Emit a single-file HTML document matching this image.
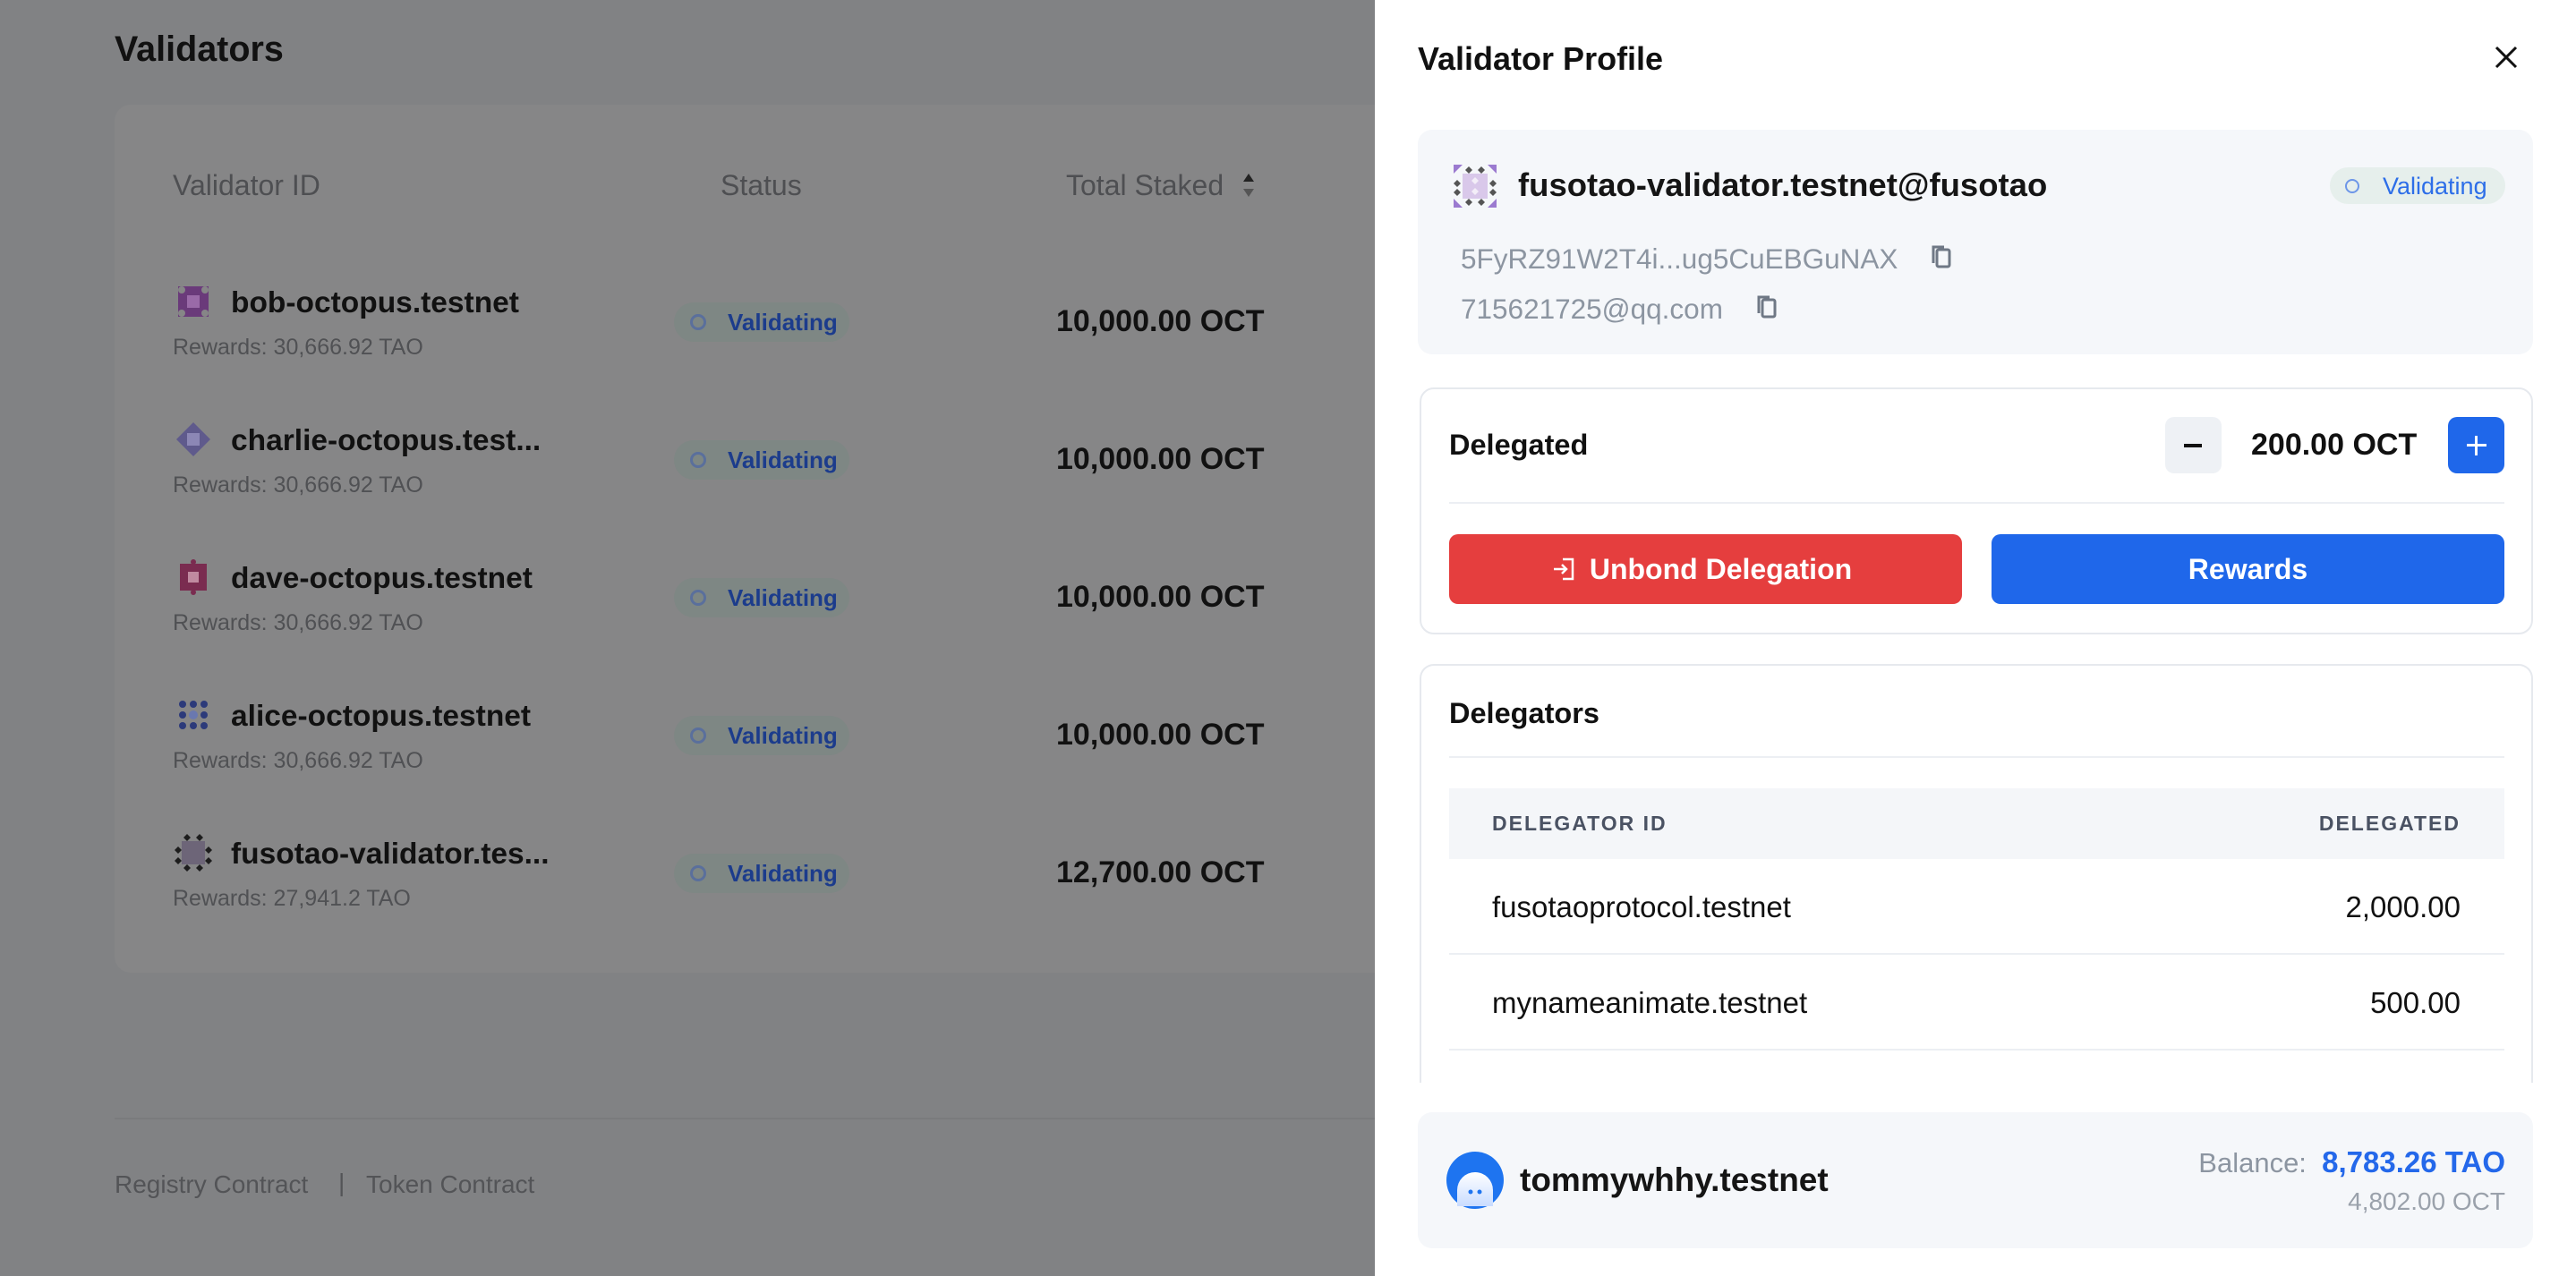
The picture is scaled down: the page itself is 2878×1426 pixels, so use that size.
<!DOCTYPE html>
<html><head><meta charset="utf-8"><style>
*{margin:0;padding:0;box-sizing:border-box}
body{width:2878px;height:1426px;overflow:hidden;background:#818284;font-family:"Liberation Sans",sans-serif;position:relative}
.a{position:absolute;white-space:nowrap}
.card{position:absolute;left:128px;top:117px;width:1500px;height:970px;background:#868687;border-radius:18px}
.hd{color:#4e4f52;font-size:32px;top:189px}
.nm{font-size:33.5px;font-weight:bold;color:#111}
.rw{font-size:25px;color:#505154}
.bd{position:absolute;left:753px;width:196px;height:44px;border-radius:22px;background:#7e8784;color:#1c3c8c;font-size:26px;font-weight:bold;line-height:44px;padding-left:60px}
.bd:before{content:"";position:absolute;left:18px;top:13px;width:12px;height:12px;border:3px solid #5a6f9c;border-radius:50%}
.amt{font-size:34px;font-weight:bold;color:#111;left:1180px}
.panel{position:absolute;left:1536px;top:0;width:1342px;height:1426px;background:#fff}
.p{position:absolute;white-space:nowrap}
.b{font-weight:bold;color:#111}
</style></head><body>
<div class="a" style="left:128px;top:33px;font-size:39.5px;font-weight:bold;color:#111">Validators</div>
<div class="card"></div>
<div class="a hd" style="left:193px">Validator ID</div>
<div class="a hd" style="left:805px">Status</div>
<div class="a hd" style="left:1191px">Total Staked</div>
<svg class="a" style="left:1387px;top:192px" width="16" height="30"><path d="M8 2 L14 11 H2Z" fill="#222"/><path d="M8 28 L14 19 H2Z" fill="#555"/></svg>

<svg class="a" style="left:195px;top:316px" width="42" height="42"><rect x="4" y="4" width="34" height="34" fill="#6a3a7a"/><rect x="14" y="14" width="14" height="14" fill="#9a6aa8"/><circle cx="8" cy="8" r="4" fill="#868687"/><circle cx="34" cy="34" r="4" fill="#868687"/><circle cx="34" cy="8" r="4" fill="#868687"/><circle cx="8" cy="34" r="4" fill="#868687"/></svg>
<div class="a nm" style="left:258px;top:320px">bob-octopus.testnet</div>
<div class="a rw" style="left:193px;top:374px">Rewards: 30,666.92 TAO</div>
<div class="bd" style="top:338px">Validating</div>
<div class="a amt" style="top:340px">10,000.00 OCT</div>

<svg class="a" style="left:195px;top:470px" width="42" height="42"><path d="M21 2 L40 21 L21 40 L2 21Z" fill="#5f5a8c"/><rect x="14" y="14" width="14" height="14" fill="#8c87b5"/></svg>
<div class="a nm" style="left:258px;top:474px">charlie-octopus.test...</div>
<div class="a rw" style="left:193px;top:528px">Rewards: 30,666.92 TAO</div>
<div class="bd" style="top:492px">Validating</div>
<div class="a amt" style="top:494px">10,000.00 OCT</div>

<svg class="a" style="left:195px;top:624px" width="42" height="42"><rect x="6" y="6" width="30" height="30" fill="#7a2c50"/><rect x="15" y="15" width="12" height="12" fill="#c08aa0"/><circle cx="21" cy="4" r="3" fill="#7a2c50"/><circle cx="21" cy="38" r="3" fill="#7a2c50"/></svg>
<div class="a nm" style="left:258px;top:628px">dave-octopus.testnet</div>
<div class="a rw" style="left:193px;top:682px">Rewards: 30,666.92 TAO</div>
<div class="bd" style="top:646px">Validating</div>
<div class="a amt" style="top:648px">10,000.00 OCT</div>

<svg class="a" style="left:195px;top:778px" width="42" height="42"><g fill="#2c3a7a"><circle cx="9" cy="9" r="4"/><circle cx="21" cy="9" r="4"/><circle cx="33" cy="9" r="4"/><circle cx="9" cy="21" r="4"/><circle cx="33" cy="21" r="4"/><circle cx="9" cy="33" r="4"/><circle cx="21" cy="33" r="4"/><circle cx="33" cy="33" r="4"/></g><circle cx="21" cy="21" r="5" fill="#6a78b0"/></svg>
<div class="a nm" style="left:258px;top:782px">alice-octopus.testnet</div>
<div class="a rw" style="left:193px;top:836px">Rewards: 30,666.92 TAO</div>
<div class="bd" style="top:800px">Validating</div>
<div class="a amt" style="top:802px">10,000.00 OCT</div>

<svg class="a" style="left:195px;top:932px" width="42" height="42"><rect x="8" y="8" width="26" height="26" fill="#6d6578"/><g fill="#1d1d1d"><path d="M14 0l4 4-4 4-4-4z"/><path d="M28 0l4 4-4 4-4-4z"/><path d="M4 14l4 4-4 4-4-4z"/><path d="M38 14l4 4-4 4-4-4z"/><path d="M4 26l4 4-4 4-4-4z"/><path d="M38 26l4 4-4 4-4-4z"/><path d="M14 34l4 4-4 4-4-4z"/><path d="M28 34l4 4-4 4-4-4z"/></g></svg>
<div class="a nm" style="left:258px;top:936px">fusotao-validator.tes...</div>
<div class="a rw" style="left:193px;top:990px">Rewards: 27,941.2 TAO</div>
<div class="bd" style="top:954px">Validating</div>
<div class="a amt" style="top:956px">12,700.00 OCT</div>

<div class="a" style="left:128px;top:1249px;width:1410px;height:2px;background:#7a7b7d"></div>
<div class="a" style="left:128px;top:1308px;font-size:28px;color:#535457">Registry Contract</div>
<div class="a" style="left:378px;top:1306px;font-size:28px;color:#535457">|</div>
<div class="a" style="left:409px;top:1308px;font-size:28px;color:#535457">Token Contract</div>

<div class="panel">
 <div class="p b" style="left:48px;top:45px;font-size:36px">Validator Profile</div>
 <svg class="p" style="left:1250px;top:50px" width="28" height="28"><path d="M3 3L25 25M25 3L3 25" stroke="#111" stroke-width="3"/></svg>

 <div class="p" style="left:48px;top:145px;width:1246px;height:251px;background:#f5f7fa;border-radius:16px"></div>
 <svg class="p" style="left:88px;top:184px" width="48" height="48"><rect x="10" y="10" width="28" height="28" fill="#d9c8ea"/><path d="M0 0h10L0 10z M48 0v10L38 0z M0 48v-10l10 10z M48 48h-10l10-10z" fill="#9b7ad0"/><g fill="#555"><path d="M17 2l4 4-4 4-4-4z"/><path d="M31 2l4 4-4 4-4-4z"/><path d="M4 17l4 4-4 4-4-4z"/><path d="M44 17l4 4-4 4-4-4z"/><path d="M4 27l4 4-4 4-4-4z"/><path d="M44 27l4 4-4 4-4-4z"/><path d="M17 38l4 4-4 4-4-4z"/><path d="M31 38l4 4-4 4-4-4z"/></g><g fill="#fff" opacity=".7"><path d="M24 14l4 4-4 4-4-4z"/><path d="M24 26l4 4-4 4-4-4z"/></g></svg>
 <div class="p b" style="left:160px;top:186px;font-size:36.5px;color:#151515">fusotao-validator.testnet@fusotao</div>
 <div class="p" style="left:1067px;top:187px;width:196px;height:41px;border-radius:21px;background:#e6efec"></div>
 <div class="p" style="left:1084px;top:200px;width:16px;height:16px;border:2px solid #6d96e8;border-radius:50%"></div>
 <div class="p" style="left:1126px;top:193px;font-size:27px;color:#2d6ee8">Validating</div>
 <div class="p" style="left:96px;top:271px;font-size:31.5px;color:#8c95a1">5FyRZ91W2T4i...ug5CuEBGuNAX</div>
 <svg class="p" style="left:620px;top:272px" width="26" height="30"><rect x="8" y="7" width="14" height="19" rx="2" fill="none" stroke="#6f7885" stroke-width="3"/><path d="M4 22V4h12" fill="none" stroke="#6f7885" stroke-width="3"/></svg>
 <div class="p" style="left:96px;top:327px;font-size:31.5px;color:#8c95a1">715621725@qq.com</div>
 <svg class="p" style="left:425px;top:328px" width="26" height="30"><rect x="8" y="7" width="14" height="19" rx="2" fill="none" stroke="#6f7885" stroke-width="3"/><path d="M4 22V4h12" fill="none" stroke="#6f7885" stroke-width="3"/></svg>

 <div class="p" style="left:50px;top:433px;width:1244px;height:276px;border:2px solid #e6e9ee;border-radius:16px"></div>
 <div class="p b" style="left:83px;top:479px;font-size:32.5px">Delegated</div>
 <div class="p" style="left:883px;top:466px;width:63px;height:63px;border-radius:10px;background:#eef1f5"></div>
 <div class="p" style="left:904px;top:496px;width:20px;height:4px;background:#111"></div>
 <div class="p b" style="left:979px;top:478px;font-size:34px">200.00 OCT</div>
 <div class="p" style="left:1199px;top:466px;width:63px;height:63px;border-radius:10px;background:#1f67ea"></div>
 <div class="p" style="left:1220px;top:496px;width:22px;height:3px;background:#fff"></div>
 <div class="p" style="left:1229px;top:487px;width:3px;height:22px;background:#fff"></div>
 <div class="p" style="left:83px;top:561px;width:1179px;height:2px;background:#eceff3"></div>
 <div class="p" style="left:83px;top:597px;width:573px;height:78px;border-radius:10px;background:#e53e3e;color:#fff;font-size:32px;font-weight:bold;text-align:center;line-height:78px;padding-left:34px">Unbond Delegation</div>
 <svg class="p" style="left:198px;top:622px" width="28" height="28"><path d="M12 3h11v22H12" fill="none" stroke="#fff" stroke-width="2.5"/><path d="M2 14h14M11 9l5 5-5 5" fill="none" stroke="#fff" stroke-width="2.5"/></svg>
 <div class="p" style="left:689px;top:597px;width:573px;height:78px;border-radius:10px;background:#1f67ea;color:#fff;font-size:32px;font-weight:bold;text-align:center;line-height:78px">Rewards</div>

 <div class="p" style="left:50px;top:742px;width:1244px;height:500px;border:2px solid #e6e9ee;border-radius:16px;border-bottom:none"></div>
 <div class="p" style="left:40px;top:1210px;width:1270px;height:40px;background:#fff"></div>
 <div class="p b" style="left:83px;top:779px;font-size:32.5px">Delegators</div>
 <div class="p" style="left:83px;top:845px;width:1179px;height:2px;background:#eceff3"></div>
 <div class="p" style="left:83px;top:881px;width:1179px;height:79px;background:#f4f6f9"></div>
 <div class="p" style="left:131px;top:907px;font-size:23px;font-weight:bold;color:#4a5263;letter-spacing:2px">DELEGATOR ID</div>
 <div class="p" style="left:1013px;top:907px;font-size:23px;font-weight:bold;color:#4a5263;letter-spacing:2px;width:200px;text-align:right">DELEGATED</div>
 <div class="p" style="left:131px;top:995px;font-size:33px;color:#111">fusotaoprotocol.testnet</div>
 <div class="p" style="left:1013px;top:995px;font-size:33px;color:#111;width:200px;text-align:right">2,000.00</div>
 <div class="p" style="left:83px;top:1065px;width:1179px;height:2px;background:#eceff3"></div>
 <div class="p" style="left:131px;top:1102px;font-size:33px;color:#111">mynameanimate.testnet</div>
 <div class="p" style="left:1013px;top:1102px;font-size:33px;color:#111;width:200px;text-align:right">500.00</div>
 <div class="p" style="left:83px;top:1172px;width:1179px;height:2px;background:#eceff3"></div>

 <div class="p" style="left:48px;top:1243px;width:1246px;height:152px;background:#f5f7fa;border-radius:16px"></div>
 <svg class="p" style="left:79px;top:1286px" width="66" height="66"><defs><linearGradient id="g" x1="0" y1="0" x2="0" y2="1"><stop offset="0" stop-color="#fff"/><stop offset="1" stop-color="#c9dcff"/></linearGradient></defs><circle cx="33" cy="33" r="32" fill="#1e74f0"/><path d="M13 62V44a20 20 0 0 1 40 0v18z" fill="url(#g)"/><circle cx="28" cy="46" r="2.5" fill="#1e74f0"/><circle cx="38" cy="46" r="2.5" fill="#1e74f0"/></svg>
 <div class="p b" style="left:162px;top:1298px;font-size:37px;color:#151515">tommywhhy.testnet</div>
 <div class="p" style="left:700px;top:1280px;width:563px;text-align:right;font-size:31px;color:#8c95a1">Balance:&nbsp; <span style="font-size:33px;font-weight:bold;color:#2468ea">8,783.26 TAO</span></div>
 <div class="p" style="left:963px;top:1327px;font-size:28px;color:#9aa1ab;width:300px;text-align:right">4,802.00 OCT</div>
</div>
</body></html>
